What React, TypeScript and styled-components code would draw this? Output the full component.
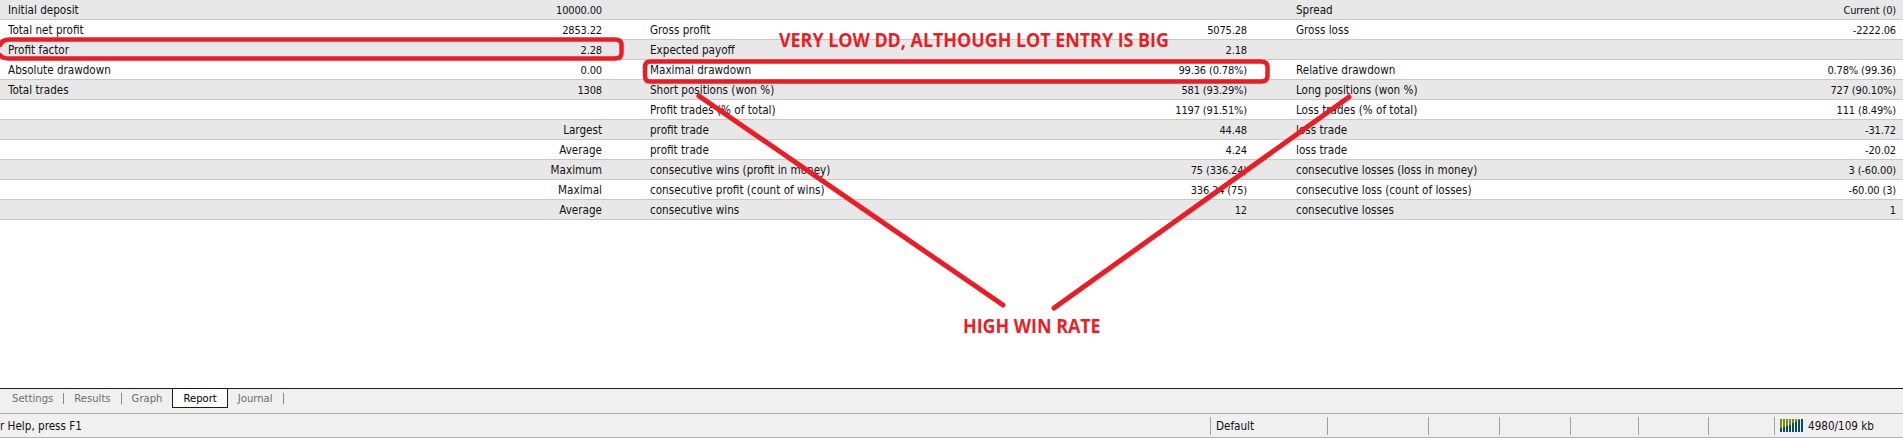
import React from "react";
import styled, {createGlobalStyle} from "styled-components";

type RowData = [string, string, string, string, string, string]

const rows: RowData[] = [
  ['Initial deposit', '10000.00', '', '', 'Spread', 'Current (0)'],
  ['Total net profit', '2853.22', 'Gross profit', '5075.28', 'Gross loss', '-2222.06'],
  ['Profit factor', '2.28', 'Expected payoff', '2.18', '', ''],
  ['Absolute drawdown', '0.00', 'Maximal drawdown', '99.36 (0.78%)', 'Relative drawdown', '0.78% (99.36)'],
  ['Total trades', '1308', 'Short positions (won %)', '581 (93.29%)', 'Long positions (won %)', '727 (90.10%)'],
  ['', '', 'Profit trades (% of total)', '1197 (91.51%)', 'Loss trades (% of total)', '111 (8.49%)'],
  ['', 'Largest', 'profit trade', '44.48', 'loss trade', '-31.72'],
  ['', 'Average', 'profit trade', '4.24', 'loss trade', '-20.02'],
  ['', 'Maximum', 'consecutive wins (profit in money)', '75 (336.24)', 'consecutive losses (loss in money)', '3 (-60.00)'],
  ['', 'Maximal', 'consecutive profit (count of wins)', '336.24 (75)', 'consecutive loss (count of losses)', '-60.00 (3)'],
  ['', 'Average', 'consecutive wins', '12', 'consecutive losses', '1'],
]

const paneWidths = [101, 71, 71, 68, 70, 66]
const meterBlue = [4, 5, 6, 7, 9, 10, 12, 13]

const GlobalStyle = createGlobalStyle`
  html, body {
    margin: 0;
    padding: 0;
    background: #fff;
  }
`

const Page = styled.div`
  position: relative;
  display: flex;
  flex-direction: column;
  width: 1903px;
  height: 438px;
  overflow: hidden;
  font-family: "DejaVu Sans Condensed", "Liberation Sans", sans-serif;
  font-size: 11.6px;
  color: #111;
`

const Table = styled.div`
  display: flex;
  flex-direction: column;
  flex: 1;
`

const Row = styled.div<{$shaded: boolean}>`
  display: grid;
  grid-template-columns: 650px 646px 607px;
  height: 19px;
  border-bottom: 1px solid #c8c8c8;
  background: ${p => p.$shaded ? '#e8e8e8' : '#fff'};
`

const Group = styled.div<{$left: number; $right: number}>`
  display: flex;
  align-items: center;
  justify-content: space-between;
  padding: 1px ${p => p.$right}px 0 ${p => p.$left}px;
  white-space: nowrap;
`

const Value = styled.span`
  font-size: 11px;
  letter-spacing: -0.16px;
`

const TabBar = styled.div`
  display: flex;
  align-items: flex-start;
  height: 24px;
  border-top: 1px solid #1c1c1c;
  border-bottom: 1px solid #a8a8a8;
  background: #f0f0f0;
  padding-left: 2px;
`

const Tab = styled.div`
  display: flex;
  align-items: center;
  height: 18px;
  padding: 0 10px;
  font-size: 11.2px;
  color: #6d6d6d;
`

const ActiveTab = styled(Tab)`
  color: #000;
  background: #fff;
  border-left: 1px solid #1c1c1c;
  border-right: 1px solid #1c1c1c;
  border-bottom: 1px solid #1c1c1c;
`

const TabSeparator = styled.div`
  width: 1px;
  height: 11px;
  margin-top: 4px;
  background: #8a8a8a;
`

const StatusBar = styled.div`
  display: flex;
  align-items: center;
  height: 23px;
  border-bottom: 1px solid #a9b5ad;
  background: #f0f0f0;
`

const HelpPane = styled.div`
  width: 1210px;
  white-space: nowrap;
`

const Pane = styled.div<{$width?: number}>`
  display: flex;
  align-items: center;
  gap: 5px;
  width: ${p => p.$width ? `${p.$width}px` : 'auto'};
  height: 18px;
  padding-left: 5px;
  box-sizing: border-box;
  border-left: 1px solid #a0a0a0;
  white-space: nowrap;
`

const Overlay = styled.svg`
  position: absolute;
  top: 0;
  left: 0;
`

const Note = styled.div<{$x: number; $y: number}>`
  position: absolute;
  left: ${p => p.$x}px;
  top: ${p => p.$y}px;
  font-family: "Open Sans", sans-serif;
  font-weight: 700;
  font-size: 19px;
  line-height: 24px;
  color: #ed1c24;
  white-space: nowrap;
  transform: scaleX(0.94);
  transform-origin: left center;
`

const Meter = () => (
  <svg width="23" height="13" viewBox="0 0 23 13">
    {meterBlue.map((h, i) => (
      <g key={i}>
        <rect x={i * 3} y={0} width="2" height={13 - h} fill="#748c14"/>
        <rect x={i * 3} y={13 - h} width="2" height={h} fill="#0f4a63"/>
      </g>
    ))}
  </svg>
)

const App = () => {
  return (
    <Page>
      <GlobalStyle/>
      <Table>
        {rows.map((r, i) => (
          <Row key={i} $shaded={i % 2 === 0}>
            <Group $left={8} $right={48}>
              <span>{r[0]}</span>
              {r[0] ? <Value>{r[1]}</Value> : <span>{r[1]}</span>}
            </Group>
            <Group $left={0} $right={49}><span>{r[2]}</span><Value>{r[3]}</Value></Group>
            <Group $left={0} $right={7}><span>{r[4]}</span><Value>{r[5]}</Value></Group>
          </Row>
        ))}
      </Table>
      <TabBar>
        <Tab>Settings</Tab>
        <TabSeparator/>
        <Tab>Results</Tab>
        <TabSeparator/>
        <Tab>Graph</Tab>
        <ActiveTab>Report</ActiveTab>
        <Tab>Journal</Tab>
        <TabSeparator/>
      </TabBar>
      <StatusBar>
        <HelpPane>r Help, press F1</HelpPane>
        <Pane $width={117}>Default</Pane>
        {paneWidths.map((w, i) => <Pane key={i} $width={w}/>)}
        <Pane><Meter/>4980/109 kb</Pane>
      </StatusBar>
      <Overlay width="1903" height="438" viewBox="0 0 1903 438" fill="none" stroke="#ed1c24" strokeWidth="4.5" strokeLinecap="round">
        <path d="M0 45 Q2 39.5 10 39.5 H615 Q621.5 39.5 621.5 45 V53 Q621.5 58.5 615 58.5 H10 Q2 58.5 0 55"/>
        <path d="M650 61.5 H1261 Q1267.5 61.5 1267.5 67 V76 Q1267.5 81.5 1261 81.5 H650 Q645 81.5 645 76 V67 Q645 61.5 650 61.5 Z"/>
        <path d="M699 96 L1003 305" strokeWidth="5"/>
        <path d="M1349 97 L1054 308" strokeWidth="5"/>
      </Overlay>
      <Note $x={779} $y={28}>VERY LOW DD, ALTHOUGH LOT ENTRY IS BIG</Note>
      <Note $x={963} $y={314}>HIGH WIN RATE</Note>
    </Page>
  )
}

export default App
